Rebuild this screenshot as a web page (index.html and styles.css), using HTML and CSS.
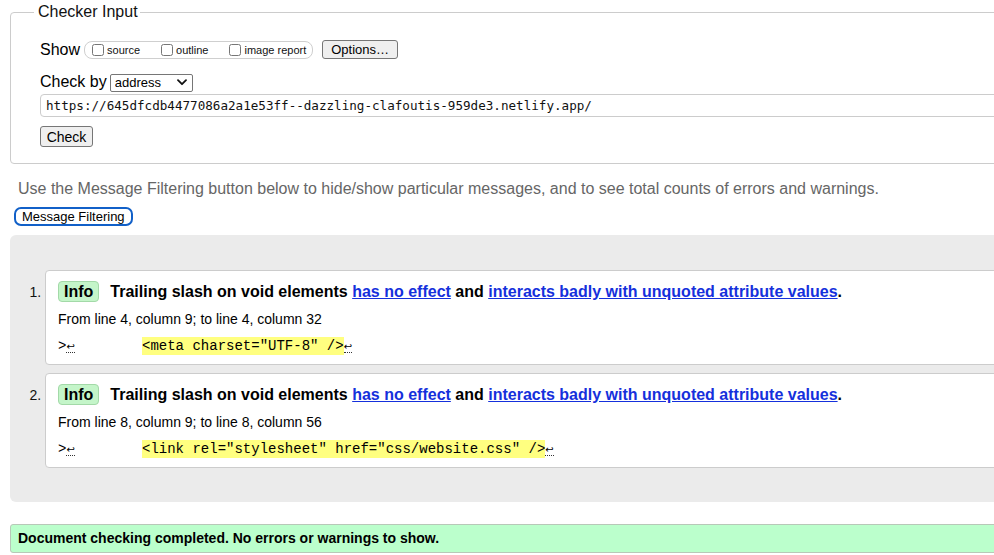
FILE: index.html
```html
<!DOCTYPE html>
<html lang="en">
<head>
<meta charset="UTF-8">
<title>Nu Html Checker</title>
<link rel="stylesheet" href="styles.css">
</head>
<body>
<div class="page">
  <form class="checker">
    <fieldset class="input-set">
      <legend class="input-legend">Checker Input</legend>
      <div class="row show-row">
        <span class="row-label">Show</span>
        <span class="show-group">
          <label class="opt"><input type="checkbox" class="cb">source</label>
          <label class="opt"><input type="checkbox" class="cb">outline</label>
          <label class="opt"><input type="checkbox" class="cb">image report</label>
        </span>
        <button type="button" class="btn options-btn">Options…</button>
      </div>
      <div class="row by-row">
        <span class="row-label">Check by</span>
        <span class="select-wrap">
          <select class="select"><option>address</option></select>
          <svg class="chev" width="10" height="7" viewBox="0 0 10 7"><path d="M1 1.2 L5 5.2 L9 1.2" fill="none" stroke="#111" stroke-width="1.8" stroke-linecap="round" stroke-linejoin="round"/></svg>
        </span>
      </div>
      <div class="url-row">
        <input class="url" type="text" value="https://645dfcdb4477086a2a1e53ff--dazzling-clafoutis-959de3.netlify.app/">
      </div>
      <div class="check-row">
        <button type="button" class="btn check-btn">Check</button>
      </div>
    </fieldset>
  </form>

  <p class="hint">Use the Message Filtering button below to hide/show particular messages, and to see total counts of errors and warnings.</p>
  <button type="button" class="filter-btn">Message Filtering</button>

  <div class="results">
    <ol class="msgs">
      <li class="msg">
        <p class="msg-title"><strong class="badge">Info</strong><span class="title-text">Trailing slash on void elements <a href="#">has no effect</a> and <a href="#">interacts badly with unquoted attribute values</a>.</span></p>
        <p class="loc">From line 4, column 9; to line 4, column 32</p>
        <p class="extract"><code>&gt;<b class="lf">↩</b>        <span class="hl">&lt;meta charset="UTF-8" /&gt;</span><b class="lf">↩</b></code></p>
      </li>
      <li class="msg">
        <p class="msg-title"><strong class="badge">Info</strong><span class="title-text">Trailing slash on void elements <a href="#">has no effect</a> and <a href="#">interacts badly with unquoted attribute values</a>.</span></p>
        <p class="loc">From line 8, column 9; to line 8, column 56</p>
        <p class="extract"><code>&gt;<b class="lf">↩</b>        <span class="hl">&lt;link rel="stylesheet" href="css/website.css" /&gt;</span><b class="lf">↩</b></code></p>
      </li>
    </ol>
  </div>

  <p class="done">Document checking completed. No errors or warnings to show.</p>
</div>
</body>
</html>
```

FILE: styles.css
```css
html, body {
  margin: 0;
  padding: 0;
  overflow: hidden;
  background: #fff;
}
body {
  font-family: "Liberation Sans", Arial, sans-serif;
  color: #000;
}
.page {
  padding-left: 10px;
  width: 1010px;
}
.checker {
  margin: 0;
}
.input-set {
  margin: 3px 0 0 0;
  padding: 19px 0 16px 23px;
  border: 1px solid #cccccc;
  border-radius: 4px;
  min-width: 0;
}
.input-legend {
  font-size: 16px;
  line-height: 18px;
  padding: 0 2px 0 4px;
  margin-left: 0;
  color: #111;
}
.row {
  display: flex;
  align-items: center;
  height: 19px;
  margin-left: 6px;
}
.row-label {
  font-size: 16px;
  margin-right: 4px;
}
.show-group {
  display: flex;
  align-items: center;
  height: 16px;
  border: 1px solid #cfcfcf;
  border-radius: 8px;
  padding: 0 6px 0 4px;
  font-size: 11px;
}
.opt {
  display: flex;
  align-items: center;
  margin-right: 18px;
  color: #111;
}
.opt:last-child {
  margin-right: 0;
}
.cb {
  width: 12px;
  height: 12px;
  margin: 0 3px 0 3px;
}
.btn {
  font-family: "Liberation Sans", Arial, sans-serif;
  font-size: 13px;
  color: #000;
  background: #efefef;
  border: 1px solid #767676;
  border-radius: 3px;
  padding: 0 6px;
  box-sizing: border-box;
}
.options-btn {
  height: 19px;
  margin-left: 9px;
  padding: 0 8px;
}
.by-row {
  margin-top: 13px;
}
.by-row .row-label {
  margin-right: 3px;
}
.select-wrap {
  position: relative;
  display: inline-block;
  height: 18px;
}
.select {
  appearance: none;
  -webkit-appearance: none;
  box-sizing: border-box;
  width: 83px;
  height: 18px;
  font-family: "Liberation Sans", Arial, sans-serif;
  font-size: 13px;
  color: #000;
  background: #fff;
  border: 1px solid #767676;
  border-radius: 2px;
  padding: 0 0 0 4px;
  margin: 0;
  line-height: 16px;
}
.chev {
  position: absolute;
  right: 6px;
  top: 6px;
  pointer-events: none;
}
.url-row {
  margin: 3px 0 0 6px;
}
.url {
  display: block;
  box-sizing: border-box;
  width: 960px;
  height: 23px;
  border: 1px solid #cccccc;
  border-radius: 4px;
  padding: 0 0 0 5px;
  font-family: "DejaVu Sans Mono", "Liberation Mono", monospace;
  font-size: 12.6px;
  color: #111;
  background: #fff;
  outline: none;
}
.check-row {
  margin: 9px 0 0 6px;
}
.check-btn {
  height: 21px;
  width: 53px;
  padding: 0;
  font-size: 14px;
}
.hint {
  margin: 16px 0 0 0;
  padding-left: 8px;
  font-size: 16px;
  line-height: 18px;
  color: #666666;
}
.filter-btn {
  display: block;
  margin: 9px 0 0 4px;
  height: 19px;
  padding: 0 6px;
  box-sizing: border-box;
  font-family: "Liberation Sans", Arial, sans-serif;
  font-size: 13px;
  line-height: 15px;
  color: #000;
  background: #fff;
  border: 2px solid #1160c8;
  border-radius: 7px;
}
.results {
  margin-top: 9px;
  background: #ebebeb;
  border-radius: 6px 0 0 6px;
  padding: 35px 0 34px 35px;
}
.msgs {
  margin: 0;
  padding: 0;
  list-style: decimal outside;
}
.msg {
  background: #fff;
  border: 1px solid #cccccc;
  border-radius: 4px;
  padding: 10px 12px 8px 12px;
  margin-bottom: 8px;
  font-size: 14px;
}
.msg:last-child {
  margin-bottom: 0;
}
.msg::marker {
  font-size: 14px;
  color: #111;
}
.msg-title {
  margin: 0;
  height: 21px;
  line-height: 21px;
  font-size: 16px;
  font-weight: bold;
}
.badge {
  display: inline-block;
  box-sizing: border-box;
  height: 21px;
  line-height: 19px;
  padding: 0 5px;
  background: #c4f5c9;
  border: 1px solid #a3d9a8;
  border-radius: 4px;
  margin-right: 11px;
  vertical-align: top;
}
.title-text a {
  color: #1530dc;
  text-decoration: underline;
}
.loc {
  margin: 9px 0 0 0;
  font-size: 14px;
  line-height: 16px;
  color: #000;
}
.extract {
  margin: 9px 0 0 0;
  line-height: 18px;
  white-space: pre;
}
.extract code {
  font-family: "Liberation Mono", "Courier New", monospace;
  font-size: 14px;
}
.lf {
  font-family: "DejaVu Sans", sans-serif;
  font-weight: normal;
  font-size: 10px;
  border-bottom: 1px dotted #333;
}
.hl {
  background: #ffff80;
  display: inline-block;
  line-height: 18px;
}
.done {
  margin: 22px 0 0 0;
  height: 29px;
  box-sizing: border-box;
  line-height: 27px;
  padding-left: 7px;
  background: #bbffcc;
  border: 1px solid #b8c8b8;
  border-radius: 3px;
  font-size: 14px;
  font-weight: bold;
}
```
